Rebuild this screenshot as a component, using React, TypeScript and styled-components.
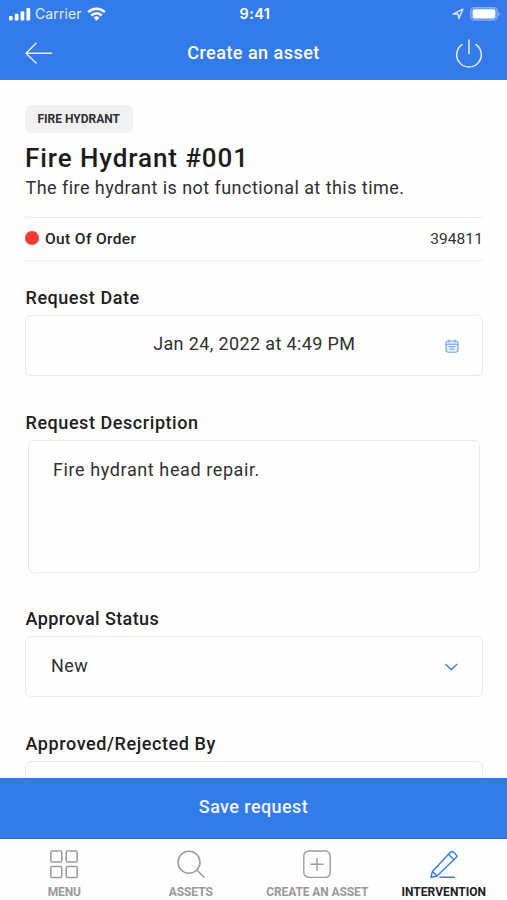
import React from 'react';
import styled, { createGlobalStyle } from 'styled-components';

const BLUE = '#347bea';

const GlobalStyle = createGlobalStyle`
  * { box-sizing: border-box; }
  body { margin: 0; background: #fefefe; }
  svg { display: block; flex: none; }
`;

const Screen = styled.div`
  height: 900px;
  display: flex;
  flex-direction: column;
  overflow: hidden;
  background: #fefefe;
  color: #303030;
  font-family: Roboto, 'Liberation Sans', sans-serif;
`;

const Header = styled.header`
  flex: none;
  height: 80px;
  background: ${BLUE};
  color: #fff;
`;

const StatusBar = styled.div`
  height: 27px;
  display: grid;
  grid-template-columns: 1fr auto 1fr;
  align-items: center;
  padding: 0 6px 0 9px;
  font: 400 14px/27px Inter, sans-serif;
`;

const StatusGroup = styled.div<{ $end?: boolean }>`
  display: flex;
  align-items: center;
  justify-content: ${p => (p.$end ? 'flex-end' : 'flex-start')};
  gap: ${p => (p.$end ? '6px' : '4px')};
`;

const Carrier = styled.span`
  color: #e3ecfc;
  letter-spacing: 0.1px;
  margin-right: 1px;
`;

const Clock = styled.span`
  font-size: 14.5px;
  font-weight: 600;
  letter-spacing: 0.4px;
`;

const TitleBar = styled.div`
  height: 52px;
  display: grid;
  grid-template-columns: 1fr auto 1fr;
  align-items: center;
  padding: 0 24px;
`;

const IconButton = styled.button<{ $end?: boolean }>`
  padding: 0;
  border: 0;
  background: none;
  color: inherit;
  justify-self: ${p => (p.$end ? 'end' : 'start')};
`;

const Title = styled.h1`
  margin: 0;
  font-size: 18px;
  line-height: 50px;
  font-weight: 500;
  letter-spacing: 0.47px;
`;

const Content = styled.main`
  flex: 1;
  min-height: 0;
  overflow: hidden;
  padding: 25px 24px 0 25px;
  display: flex;
  flex-direction: column;
`;

const Badge = styled.span`
  align-self: flex-start;
  flex: none;
  padding: 0 12.5px;
  border-radius: 6px;
  background: #f1f1f1;
  font-size: 12px;
  line-height: 28px;
  font-weight: 700;
  letter-spacing: 0;
`;

const Heading = styled.h2`
  margin: 9px 0 1px 0;
  flex: none;
  font-size: 26px;
  line-height: 32px;
  font-weight: 500;
  letter-spacing: 0.92px;
  color: #1c1c1c;
`;

const Summary = styled.p`
  margin: 0 0 16px;
  padding-left: 0.5px;
  flex: none;
  font-size: 18px;
  line-height: 26px;
  letter-spacing: 0.45px;
`;

const StatusRow = styled.div`
  flex: none;
  height: 44px;
  display: flex;
  align-items: center;
  border: solid #ebebeb;
  border-width: 1px 0;
  font-size: 15.5px;
  line-height: 20px;
`;

const Dot = styled.i`
  width: 14px;
  height: 14px;
  margin: 0 6px 3px 0;
  border-radius: 50%;
  background: #fc3535;
`;

const State = styled.span`
  font-weight: 500;
  color: #222;
  letter-spacing: 0.38px;
`;

const AssetNumber = styled.span`
  margin-left: auto;
  letter-spacing: 0.1px;
`;

const Label = styled.label<{ $top: number; $spacing: number }>`
  flex: none;
  margin-top: ${p => p.$top}px;
  padding-left: 0.5px;
  font-size: 18px;
  line-height: 24px;
  font-weight: 500;
  letter-spacing: ${p => p.$spacing}px;
  color: #202020;
`;

const Field = styled.div`
  flex: none;
  height: 61px;
  margin-top: 5px;
  display: grid;
  grid-template-columns: 14px 1fr 14px;
  align-items: center;
  padding: 0 23.5px 0 24px;
  border: 1px solid #e9e9e9;
  border-radius: 6px;
  font-size: 18px;
  line-height: 24px;
`;

const FieldValue = styled.span<{ $start?: boolean }>`
  padding-bottom: ${p => (p.$start ? '1px' : '3px')};
  margin-left: ${p => (p.$start ? '-13px' : '0')};
  text-align: ${p => (p.$start ? 'left' : 'center')};
  letter-spacing: 0.37px;
  grid-column: 2;
`;

const TextArea = styled.div`
  flex: none;
  height: 133px;
  margin: 5px 3px 0 3px;
  padding: 17px 24px;
  border: 1px solid #e9e9e9;
  border-radius: 6px;
  font-size: 18px;
  line-height: 24px;
  letter-spacing: 0.6px;
`;

const SaveButton = styled.button`
  flex: none;
  height: 61px;
  padding: 0 0 2px;
  border: 0;
  border-bottom: 1px solid #2d6ad0;
  background: ${BLUE};
  color: #eef5ff;
  font: 500 18px/24px Roboto, sans-serif;
  letter-spacing: 0.42px;
`;

const TabBar = styled.nav`
  flex: none;
  height: 61px;
  display: grid;
  grid-template-columns: repeat(4, 126.5px);
  padding-left: 1px;
  background: #fefefe;
`;

const Tab = styled.a<{ $active?: boolean }>`
  display: flex;
  flex-direction: column;
  align-items: center;
  padding-top: 11px;
  gap: 6px;
  color: ${p => (p.$active ? BLUE : '#9b9b9b')};
`;

const TabText = styled.span<{ $active?: boolean }>`
  font-size: 12px;
  line-height: 15px;
  font-weight: 700;
  white-space: nowrap;
  letter-spacing: ${p => (p.$active ? '0.05px' : '-0.1px')};
  color: ${p => (p.$active ? '#222' : '#999')};
`;

const SignalIcon = () => (
  <svg width="22" height="14" viewBox="0 0 22 14" fill="#fff">
    <rect x="0" y="9" width="3.6" height="4.5" rx="1" />
    <rect x="5.8" y="6.8" width="3.7" height="6.7" rx="1" />
    <rect x="11.6" y="4.2" width="3.7" height="9.3" rx="1" />
    <rect x="17.4" y="1" width="3.8" height="12.5" rx="1" />
  </svg>
);

const WifiIcon = () => (
  <svg width="19" height="14" viewBox="0 0 19 14" fill="none" stroke="#fff" strokeWidth="2.5">
    <path d="M1.2 5.2a11.7 11.7 0 0 1 16.6 0" />
    <path d="M4.3 8.5a7.3 7.3 0 0 1 10.4 0" />
    <path d="M9.5 13.7 6.6 10.8a4.1 4.1 0 0 1 5.8 0z" fill="#fff" stroke="none" />
  </svg>
);

const LocationIcon = () => (
  <svg width="12" height="12" viewBox="0 0 12 12" fill="none" stroke="#d6e4fc" strokeWidth="1.5" strokeLinejoin="round">
    <path d="M1 6.1 10.8 1.2 6.8 10.6 6 6.1z" />
  </svg>
);

const BatteryIcon = () => (
  <svg width="31" height="14" viewBox="0 0 31 14">
    <rect x=".6" y=".6" width="26.8" height="12.6" rx="3.8" fill="#5b95ee" stroke="#86b0f3" strokeWidth="1.1" />
    <rect x="2.7" y="2.3" width="22.6" height="9.2" rx="2" fill="#fff" />
    <path d="M28.3 4.7c2 .9 2 3.7 0 4.6z" fill="#86b0f3" />
  </svg>
);

const BackIcon = () => (
  <svg width="30" height="24" viewBox="0 0 30 24" fill="none" stroke="#e5efff" strokeWidth="1.5" strokeLinecap="round" strokeLinejoin="round">
    <path d="M27.5 12.2H2M12 2.3 2 12.2l10 9.8" />
  </svg>
);

const PowerIcon = () => (
  <svg width="28" height="30" viewBox="0 0 28 30" fill="none" stroke="#e5efff" strokeWidth="1.5" strokeLinecap="round">
    <path d="M14 2v13.5M7 6.6a12.3 12.3 0 1 0 14 0" />
  </svg>
);

const CalendarIcon = () => (
  <svg width="14" height="14" viewBox="0 0 14 14" fill="none" stroke="#72a3f2" strokeWidth="1.1" strokeLinecap="round">
    <rect x="1" y="2" width="12" height="11.2" rx="2.2" fill="#e3edfd" />
    <path d="M1 5.2h12M4 .8v2.4M10 .8v2.4M4 7.7h6M5.4 10h3.2" />
  </svg>
);

const ChevronIcon = () => (
  <svg width="14" height="8" viewBox="0 0 14 8" fill="none" stroke="#4f89df" strokeWidth="1.5">
    <path d="m.3 1 6 5.6L12.3 1" />
  </svg>
);

const MenuIcon = () => (
  <svg width="28" height="29" viewBox="0 0 28 29" fill="none" stroke="currentColor" strokeWidth="1.5">
    <rect x=".8" y="1" width="11" height="11" rx="1.5" />
    <rect x="16.2" y="1" width="11" height="11" rx="1.5" />
    <rect x=".8" y="16.4" width="11" height="11" rx="1.5" />
    <rect x="16.2" y="16.4" width="11" height="11" rx="1.5" />
  </svg>
);

const SearchIcon = () => (
  <svg width="28" height="29" viewBox="0 0 28 29" fill="none" stroke="currentColor" strokeWidth="1.5">
    <circle cx="12" cy="12.2" r="11" />
    <path d="m19.8 20 7.6 7.6" />
  </svg>
);

const AddIcon = () => (
  <svg width="28" height="29" viewBox="0 0 28 29" fill="none" stroke="currentColor" strokeWidth="1.4">
    <rect x=".8" y="1" width="26.4" height="26.4" rx="5" />
    <path d="M14 7.7v13M7.5 14.2h13" />
  </svg>
);

const PencilIcon = () => (
  <svg width="28" height="29" viewBox="0 0 28 29" fill="none" stroke="currentColor" strokeWidth="1.4" strokeLinejoin="round">
    <path d="M1 27.3 2.4 21.4 20.6 2.1c.8-.9 1.8-.9 2.7 0l2.8 2.7c.9.9.9 1.8 0 2.7L7 26zM18.6 4.3l5.2 5.3M2.4 21.4 7 26M9.4 27.2h15.4" />
  </svg>
);

const tabs = [
  { name: 'MENU', Icon: MenuIcon },
  { name: 'ASSETS', Icon: SearchIcon },
  { name: 'CREATE AN ASSET', Icon: AddIcon },
  { name: 'INTERVENTION', Icon: PencilIcon, active: true },
];

export default function App() {
  return (
    <Screen>
      <GlobalStyle />
      <Header>
        <StatusBar>
          <StatusGroup>
            <SignalIcon />
            <Carrier>Carrier</Carrier>
            <WifiIcon />
          </StatusGroup>
          <Clock>9:41</Clock>
          <StatusGroup $end>
            <LocationIcon />
            <BatteryIcon />
          </StatusGroup>
        </StatusBar>
        <TitleBar>
          <IconButton aria-label="Back"><BackIcon /></IconButton>
          <Title>Create an asset</Title>
          <IconButton $end aria-label="Power"><PowerIcon /></IconButton>
        </TitleBar>
      </Header>
      <Content>
        <Badge>FIRE HYDRANT</Badge>
        <Heading>Fire Hydrant #001</Heading>
        <Summary>The fire hydrant is not functional at this time.</Summary>
        <StatusRow>
          <Dot />
          <State>Out Of Order</State>
          <AssetNumber>394811</AssetNumber>
        </StatusRow>
        <Label $top={25} $spacing={0.55}>Request Date</Label>
        <Field>
          <FieldValue>Jan 24, 2022 at 4:49 PM</FieldValue>
          <CalendarIcon />
        </Field>
        <Label $top={35} $spacing={0.56}>Request Description</Label>
        <TextArea>Fire hydrant head repair.</TextArea>
        <Label $top={34} $spacing={0.4}>Approval Status</Label>
        <Field>
          <FieldValue $start>New</FieldValue>
          <ChevronIcon />
        </Field>
        <Label $top={35} $spacing={0.58}>Approved/Rejected By</Label>
        <Field />
      </Content>
      <SaveButton>Save request</SaveButton>
      <TabBar>
        {tabs.map(({ name, Icon, active }) => (
          <Tab key={name} $active={active}>
            <Icon />
            <TabText $active={active}>{name}</TabText>
          </Tab>
        ))}
      </TabBar>
    </Screen>
  );
}
